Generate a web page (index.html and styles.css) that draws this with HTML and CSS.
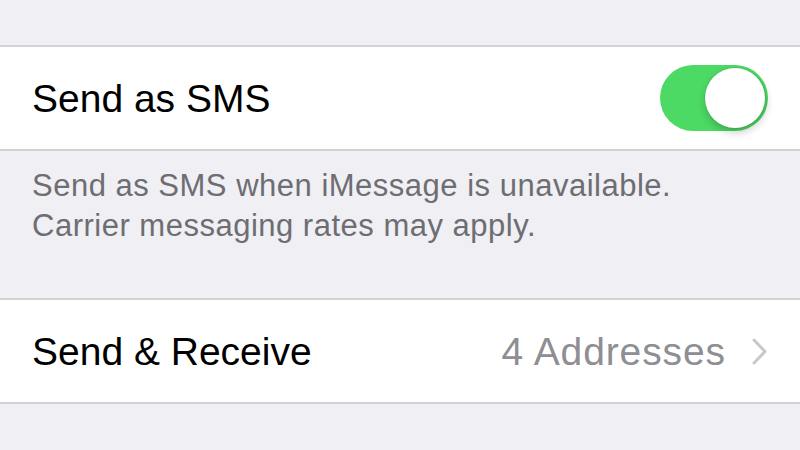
FILE: index.html
```html
<!DOCTYPE html>
<html lang="en">

<head>
    <meta charset="UTF-8">
    <meta name="viewport" content="width=device-width, initial-scale=1.0">
    <title>Messages</title>
    <link rel="stylesheet" href="styles.css">
</head>

<body>
    <div class="spacer"></div>

    <div class="group">
        <div class="cell">
            <span class="label">Send as SMS</span>
            <div class="switch on"><div class="knob"></div></div>
        </div>
    </div>

    <p class="footer">
        Send as SMS when iMessage is unavailable.<br>
        Carrier messaging rates may apply.
    </p>

    <div class="group">
        <div class="cell">
            <span class="label">Send &amp; Receive</span>
            <span class="detail">4 Addresses</span>
            <svg class="chevron" width="15" height="27" viewBox="0 0 15 27">
                <polyline points="2,2 13,13.5 2,25" fill="none" stroke="#c7c7cc" stroke-width="3" stroke-linecap="round" stroke-linejoin="round" />
            </svg>
        </div>
    </div>
</body>

</html>
```

FILE: styles.css
```css
body {
    margin: 0;
    background: #efeff4;
    font-family: "Liberation Sans", Arial, sans-serif;
    color: #000;
}

.spacer {
    height: 45px;
}

.group {
    background: #fff;
    border-top: 2px solid #d1d1d6;
    border-bottom: 2px solid #d1d1d6;
}

.cell {
    display: flex;
    align-items: center;
    height: 102px;
    padding: 0 32px 0 32px;
}

.label {
    flex: 1;
    font-size: 39px;
    line-height: 39px;
}

.detail {
    font-size: 39px;
    line-height: 39px;
    letter-spacing: 0.9px;
    color: #8e8e93;
    margin-right: 26px;
}

.chevron {
    display: block;
    margin-right: 1px;
}

/* toggle switch */
.switch {
    position: relative;
    width: 108px;
    height: 66px;
    border-radius: 33px;
    background: #e5e5ea;
}

.switch.on {
    background: #4cd964;
}

.knob {
    position: absolute;
    top: 3px;
    right: 3px;
    width: 60px;
    height: 60px;
    border-radius: 50%;
    background: #fff;
    box-shadow: 0 0 0 1px rgba(0, 0, 0, 0.05), 1px 4px 8px rgba(0, 0, 0, 0.22);
}

.footer {
    margin: 0;
    padding: 15px 30px 52px 32px;
    font-size: 31px;
    line-height: 40px;
    letter-spacing: 0.5px;
    color: #6d6d72;
}
```
